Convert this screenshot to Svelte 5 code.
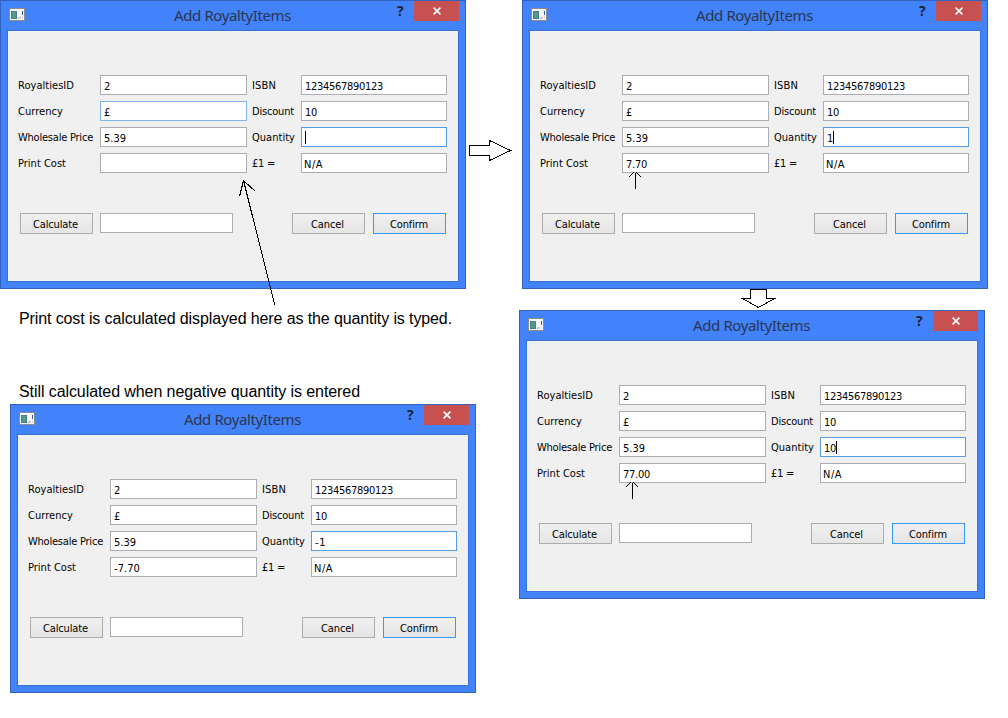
<script>
  // Spreads letters so that a text takes the given width.
  function fit(node, width) {
    const n = node.textContent.length;
    const natural = node.getBoundingClientRect().width;
    node.style.letterSpacing = (width - natural) / n + 'px';
  }

  const dialogs = [
    { x: 0, y: 0, hot: true, quantity: '', qw: 0, caret: true, cost: '', cw: 0 },
    { x: 522, y: 0, quantity: '1', qw: 6, caret: true, cost: '7.70', cw: 21 },
    { x: 519, y: 310, quantity: '10', qw: 12, caret: true, cost: '77.00', cw: 27 },
    { x: 10, y: 404, quantity: '-1', qw: 11, cost: '-7.70', cw: 26 }
  ];

  const rowsOf = (d) => [
    { l: 'RoyaltiesID', lw: 56, v: '2', vw: 7, r: 'ISBN', rw: 24, u: '1234567890123', uw: 78 },
    { l: 'Currency', lw: 45, v: '£', vw: 7, r: 'Discount', rw: 42, u: '10', uw: 12, hot: d.hot },
    { l: 'Wholesale Price', lw: 75, v: '5.39', vw: 22, r: 'Quantity', rw: 43, u: d.quantity, uw: d.qw, focus: true, caret: d.caret },
    { l: 'Print Cost', lw: 48, v: d.cost, vw: d.cw, r: '£1 =', rw: 23, u: 'N/A', uw: 19, na: true }
  ];
</script>

{#snippet fitted(text, width)}
  {#if text}<span class="t" use:fit={width}>{text}</span>{/if}
{/snippet}

<main>
  {#each dialogs as d}
    <section class="window" style="left:{d.x}px;top:{d.y}px">
      <header>
        <svg class="app" width="16" height="14" viewBox="0 0 16 14" shape-rendering="crispEdges">
          <rect x="0" y="0" width="16" height="13" fill="#8d8d8d" />
          <rect x="1" y="1" width="14" height="11" fill="#f8f8f8" />
          <rect x="2" y="3" width="6" height="8" fill="#4c7d94" />
          <rect x="3" y="4" width="4" height="6" fill="#4d9c84" />
          <rect x="9" y="9" width="3" height="2" fill="#c9c9c9" />
          <rect x="13" y="3" width="1" height="4" fill="#28659a" />
          <rect x="13" y="8" width="1" height="3" fill="#ddd" />
        </svg>
        <h1>{@render fitted('Add RoyaltyItems', 117)}</h1>
        <span class="help">?</span>
        <span class="close">
          <svg width="8" height="8" viewBox="0 0 8 8"><path d="M.6 .6L7.4 7.4M7.4 .6L.6 7.4" stroke="#fff" stroke-width="1.6" /></svg>
        </span>
      </header>
      <div class="client">
        <div class="form">
          {#each rowsOf(d) as r}
            <span class="label">{@render fitted(r.l, r.lw)}</span>
            <div class="field" class:hot={r.hot}>{@render fitted(r.v, r.vw)}</div>
            <span class="label second">{@render fitted(r.r, r.rw)}</span>
            <div class="field" class:focus={r.focus} class:na={r.na}>{@render fitted(r.u, r.uw)}{#if r.caret}<i></i>{/if}</div>
          {/each}
        </div>
        <div class="actions">
          <button>{@render fitted('Calculate', 45)}</button>
          <div class="field result"></div>
          <button>{@render fitted('Cancel', 33)}</button>
          <button class="default">{@render fitted('Confirm', 38)}</button>
        </div>
      </div>
    </section>
  {/each}

  <p class="note" style="left:19px;top:310px">{@render fitted('Print cost is calculated displayed here as the quantity is typed.', 433)}</p>
  <p class="note" style="left:19px;top:383px">{@render fitted('Still calculated when negative quantity is entered', 341)}</p>

  <svg class="marks" width="1008" height="718" viewBox="0 0 1008 718" fill="none" stroke="#000" shape-rendering="crispEdges">
    <path d="M274.7 305L243.5 180.5M239.5 196.5L243.5 180.5L255.5 191.5" />
    <path d="M469.5 145.5H489.5V140.5L510.5 150.5L489.5 160.5V155.5H469.5Z" fill="#fff" />
    <path d="M750.5 289.5H766.5V298.5H774.5L758.5 307.5L742.5 298.5H750.5Z" fill="#fff" />
    <path d="M635.5 189V173M628.5 177.5L633.5 172.5M641.5 177.5L636.5 172.5" />
    <path d="M632.5 499V483M625.5 487.5L630.5 482.5M638.5 487.5L633.5 482.5" />
  </svg>
</main>

<style>
  :global(body) { margin: 0; background: #fff; }
  main { position: relative; width: 1008px; height: 718px; overflow: hidden; font: 11px/14px "DejaVu Sans Condensed", "DejaVu Sans", sans-serif; font-stretch: condensed; color: #000; }
  .t { display: inline-block; white-space: pre; }
  .window { position: absolute; box-sizing: border-box; width: 466px; height: 289px; padding: 0 6px 6px; border: 1px solid #3163bd; background: #4282fa; }
  header { display: flex; height: 29px; align-items: flex-start; }
  .app { margin: 7px 0 0 2px; flex: none; }
  h1 { margin: 4px 0 0 149px; width: 120px; flex: none; font: 400 15px/20px "Noto Sans", "Open Sans", sans-serif; color: #2b3750; }
  .help { margin: 0 0 0 103px; width: 16px; flex: none; font: 700 14px/20px "Open Sans", sans-serif; color: #1c2433; }
  .close { display: flex; width: 45px; height: 20px; margin-left: auto; align-items: center; justify-content: center; background: #c75050; flex: none; }
  .client { box-sizing: border-box; height: 252px; border: 1px solid #3a70da; background: #f0f0f0; padding: 44px 0 0 10px; }
  .form { display: grid; grid-template-columns: 82px 147px 54px 146px; grid-auto-rows: 20px; row-gap: 6px; }
  .label { padding-top: 1px; line-height: 20px; white-space: nowrap; }
  .second { padding-left: 5px; }
  .field { box-sizing: border-box; display: flex; height: 20px; padding: 2px 0 0 3px; border: 1px solid #abadb3; background: #fff; line-height: 17px; }
  .na { padding-left: 2px; }
  .hot { border-color: #7eb4ea; }
  .focus { border-color: #569de5; }
  i { width: 1px; height: 13px; margin-top: 1px; background: #000; }
  .actions { display: flex; margin: 40px 0 0 2px; align-items: flex-start; }
  button { box-sizing: border-box; width: 73px; height: 21px; padding: 2px 2px 0 0; border: 1px solid #acacac; border-radius: 0; background: linear-gradient(#f0f0f0, #e5e5e5); font: inherit; line-height: 17px; color: #000; }
  .result { width: 133px; margin: 0 59px 0 7px; }
  .default { margin-left: 8px; padding-right: 1px; border-color: #3399ff; }
  .note { position: absolute; margin: 0; font: 16px/18px "Liberation Sans", Arial, sans-serif; white-space: nowrap; }
  .marks { position: absolute; left: 0; top: 0; }
</style>
